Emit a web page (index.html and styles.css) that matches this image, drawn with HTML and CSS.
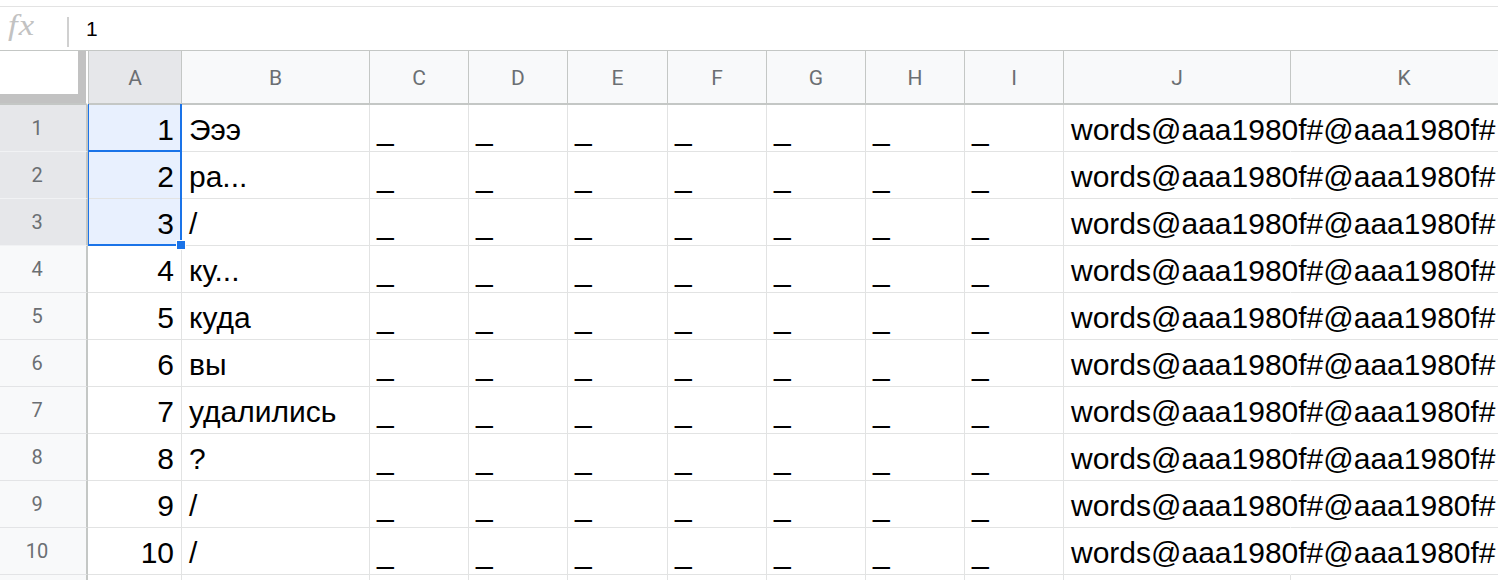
FILE: index.html
```html
<!DOCTYPE html>
<html lang="ru">
<head>
<meta charset="utf-8">
<title>Sheet</title>
<link rel="stylesheet" href="styles.css">
</head>
<body>
<div class="topline"></div>
<div class="formula-bar">
  <div class="fx"><span class="fx-text">fx</span></div>
  <div class="fsep"></div>
  <div class="fvalue">1</div>
</div>
<div class="sheet">
  <div class="corner"><div class="corner-inner"></div></div>
  <div class="ch ch-sel">A</div><div class="ch">B</div><div class="ch">C</div><div class="ch">D</div><div class="ch">E</div><div class="ch">F</div><div class="ch">G</div><div class="ch">H</div><div class="ch">I</div><div class="ch">J</div><div class="ch">K</div>

  <div class="rh rh-sel">1</div><div class="c num sel">1</div><div class="c">Эээ</div><div class="c">_</div><div class="c">_</div><div class="c">_</div><div class="c">_</div><div class="c">_</div><div class="c">_</div><div class="c">_</div><div class="c over">words@aaa1980f#@aaa1980f#</div><div class="c after"></div>
  <div class="rh rh-sel">2</div><div class="c num sel">2</div><div class="c">ра...</div><div class="c">_</div><div class="c">_</div><div class="c">_</div><div class="c">_</div><div class="c">_</div><div class="c">_</div><div class="c">_</div><div class="c over">words@aaa1980f#@aaa1980f#</div><div class="c after"></div>
  <div class="rh rh-sel">3</div><div class="c num sel">3</div><div class="c">/</div><div class="c">_</div><div class="c">_</div><div class="c">_</div><div class="c">_</div><div class="c">_</div><div class="c">_</div><div class="c">_</div><div class="c over">words@aaa1980f#@aaa1980f#</div><div class="c after"></div>
  <div class="rh">4</div><div class="c num">4</div><div class="c">ку...</div><div class="c">_</div><div class="c">_</div><div class="c">_</div><div class="c">_</div><div class="c">_</div><div class="c">_</div><div class="c">_</div><div class="c over">words@aaa1980f#@aaa1980f#</div><div class="c after"></div>
  <div class="rh">5</div><div class="c num">5</div><div class="c">куда</div><div class="c">_</div><div class="c">_</div><div class="c">_</div><div class="c">_</div><div class="c">_</div><div class="c">_</div><div class="c">_</div><div class="c over">words@aaa1980f#@aaa1980f#</div><div class="c after"></div>
  <div class="rh">6</div><div class="c num">6</div><div class="c">вы</div><div class="c">_</div><div class="c">_</div><div class="c">_</div><div class="c">_</div><div class="c">_</div><div class="c">_</div><div class="c">_</div><div class="c over">words@aaa1980f#@aaa1980f#</div><div class="c after"></div>
  <div class="rh">7</div><div class="c num">7</div><div class="c">удалились</div><div class="c">_</div><div class="c">_</div><div class="c">_</div><div class="c">_</div><div class="c">_</div><div class="c">_</div><div class="c">_</div><div class="c over">words@aaa1980f#@aaa1980f#</div><div class="c after"></div>
  <div class="rh">8</div><div class="c num">8</div><div class="c">?</div><div class="c">_</div><div class="c">_</div><div class="c">_</div><div class="c">_</div><div class="c">_</div><div class="c">_</div><div class="c">_</div><div class="c over">words@aaa1980f#@aaa1980f#</div><div class="c after"></div>
  <div class="rh">9</div><div class="c num">9</div><div class="c">/</div><div class="c">_</div><div class="c">_</div><div class="c">_</div><div class="c">_</div><div class="c">_</div><div class="c">_</div><div class="c">_</div><div class="c over">words@aaa1980f#@aaa1980f#</div><div class="c after"></div>
  <div class="rh">10</div><div class="c num">10</div><div class="c">/</div><div class="c">_</div><div class="c">_</div><div class="c">_</div><div class="c">_</div><div class="c">_</div><div class="c">_</div><div class="c">_</div><div class="c over">words@aaa1980f#@aaa1980f#</div><div class="c after"></div>
  <div class="rh"></div><div class="c"></div><div class="c"></div><div class="c"></div><div class="c"></div><div class="c"></div><div class="c"></div><div class="c"></div><div class="c"></div><div class="c"></div><div class="c"></div><div class="c"></div>

  <div class="selbox"></div>
  <div class="activebox"></div>
  <div class="handle"></div>
</div>
</body>
</html>
```
FILE: styles.css
```css
html, body {
  margin: 0;
  padding: 0;
  background: #fff;
}
body {
  width: 1498px;
  height: 580px;
  overflow: hidden;
  font-family: "Liberation Sans", Arial, sans-serif;
}
.topline {
  height: 6px;
  border-bottom: 1px solid #e3e3e3;
}
.formula-bar {
  height: 43px;
  display: flex;
  align-items: center;
  border-bottom: 1px solid #c4c7c5;
}
.fx {
  width: 59px;
  padding-left: 8px;
  margin-top: -8px;
}
.fx-text {
  display: inline-block;
  font-family: "Liberation Serif", "Times New Roman", serif;
  font-style: italic;
  font-size: 30px;
  line-height: 30px;
  color: #c2c2c2;
  letter-spacing: 1px;
  transform: scaleX(1.15);
  transform-origin: left center;
}
.fsep {
  width: 2px;
  height: 30px;
  background: #d0d0d0;
  margin-top: 6px;
}
.fvalue {
  padding-left: 17px;
  font-size: 21px;
  line-height: 21px;
  margin-top: 0;
  color: #000;
}
.sheet {
  position: relative;
  display: grid;
  grid-template-columns: 88px 94px 188px 99px 99px 100px 99px 99px 99px 99px 227px 227px;
  grid-template-rows: 54px repeat(11, 47px);
  width: 1518px;
}
.corner {
  box-sizing: border-box;
  background: #c2c2c2;
  border-right: 2px solid #ffffff;
  border-bottom: 2px solid #c4c7c5;
}
.corner-inner {
  width: 78px;
  height: 43px;
  background: #fff;
}
.ch {
  box-sizing: border-box;
  background: #f8f9fa;
  border-right: 1px solid #c4c7c5;
  border-bottom: 2px solid #c4c7c5;
  display: flex;
  align-items: center;
  justify-content: center;
  font-family: Roboto, "Liberation Sans", sans-serif;
  font-size: 21px;
  color: #6b6f73;
  padding-top: 2px;
}
.ch-sel {
  background: #e6e7ea;
  border-left: 1px solid #c4c7c5;
}
.rh {
  box-sizing: border-box;
  background: #f8f9fa;
  border-right: 2px solid #c4c7c5;
  border-bottom: 1px solid #e3e4e6;
  display: flex;
  align-items: center;
  justify-content: center;
  padding-right: 12px;
  font-family: Roboto, "Liberation Sans", sans-serif;
  font-size: 20px;
  color: #6b6f73;
}
.rh-sel {
  background: #e6e7ea;
  border-bottom-color: #f1f2f4;
}
.c {
  box-sizing: border-box;
  border-right: 1px solid #e2e3e3;
  border-bottom: 1px solid #e2e3e3;
  display: flex;
  align-items: flex-end;
  padding: 0 7px 6px 7px;
  font-size: 30px;
  line-height: 30px;
  color: #000;
  white-space: nowrap;
  overflow: hidden;
}
.num {
  justify-content: flex-end;
}
.sel {
  background: #e8f0fe;
}
.over {
  overflow: visible;
  border-right-color: transparent;
  position: relative;
  z-index: 1;
}
.selbox {
  position: absolute;
  left: 88px;
  top: 53px;
  width: 94px;
  height: 142px;
  box-sizing: border-box;
  border-right: 2px solid #1a73e8;
  border-bottom: 2px solid #1a73e8;
  border-left: 1px solid #1a73e8;
  pointer-events: none;
  z-index: 2;
}
.activebox {
  position: absolute;
  left: 88px;
  top: 53px;
  width: 94px;
  height: 48px;
  box-sizing: border-box;
  border-bottom: 2px solid #1a73e8;
  z-index: 2;
}
.handle {
  position: absolute;
  left: 176px;
  top: 189px;
  width: 8px;
  height: 8px;
  background: #1a73e8;
  border: 1px solid #fff;
  z-index: 3;
}
```
